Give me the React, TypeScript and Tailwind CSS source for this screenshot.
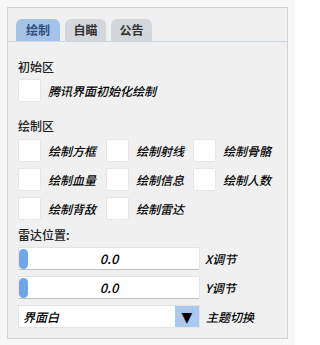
import React from "react";

function Box() {
  return <div className="w-[23px] h-[23px] bg-white border border-[#e6e6e6] rounded-[2px] shrink-0" />;
}

function Check({ label }: { label: string }) {
  return (
    <div className="flex items-center h-[23px]">
      <Box />
      <span className="ml-[7px] text-[12px] italic font-medium text-black leading-none">{label}</span>
    </div>
  );
}

function Slider({ label }: { label: string }) {
  return (
    <div className="flex items-center h-[23px]">
      <div className="relative w-[182px] h-[23px] bg-white border border-[#e4e4e4] border-b-[#bdbdbd] rounded-[2px] flex items-center justify-center">
        <div className="absolute left-[0px] top-[1px] w-[9px] h-[20px] rounded-[5px] bg-[#6fa5eb]" />
        <span className="text-[13px] italic font-medium text-black leading-none">0.0</span>
      </div>
      <span className="ml-[5px] text-[12px] italic font-medium text-black leading-none">{label}</span>
    </div>
  );
}

export default function App() {
  return (
    <div className="w-[295px] h-[345px] bg-[#f7f7f7] pt-[7px] px-[7px] pb-[6px] font-['Noto_Sans_CJK_SC','Noto_Sans',sans-serif]">
      <div className="h-full border border-[#d2d2d2] bg-[#f0f0f0] flex flex-col">
        <div className="flex items-end gap-[5px] pt-[11px] px-[8px] border-b border-[#cbd6e2]">
          <div className="w-[44px] h-[22px] rounded-t-[6px] bg-[#a5c3e7] flex items-center justify-center text-[12px] font-bold text-[#2d4f80]">绘制</div>
          <div className="w-[41px] h-[22px] rounded-t-[6px] bg-[#d3d7dc] flex items-center justify-center text-[12px] font-bold text-[#333]">自瞄</div>
          <div className="w-[41px] h-[22px] rounded-t-[6px] bg-[#d3d7dc] flex items-center justify-center text-[12px] font-bold text-[#333]">公告</div>
        </div>
        <div className="flex flex-col px-[10px]">
          <div className="mt-[16px] h-[18px] leading-[18px] text-[12px] font-medium text-[#222]">初始区</div>
          <div className="mt-[3px]"><Check label="腾讯界面初始化绘制" /></div>
          <div className="mt-[15px] h-[18px] leading-[18px] text-[12px] font-medium text-[#222]">绘制区</div>
          <div className="mt-[4px] grid grid-cols-[88px_87px_88px] gap-y-[6px]">
            <Check label="绘制方框" />
            <Check label="绘制射线" />
            <Check label="绘制骨骼" />
            <Check label="绘制血量" />
            <Check label="绘制信息" />
            <Check label="绘制人数" />
            <Check label="绘制背敌" />
            <Check label="绘制雷达" />
          </div>
          <div className="mt-[6px] h-[18px] leading-[18px] text-[12px] font-medium text-[#222]">雷达位置:</div>
          <div className="mt-[3px] flex flex-col gap-[6px]">
            <Slider label="X调节" />
            <Slider label="Y调节" />
            <div className="flex items-center h-[23px]">
              <div className="w-[182px] h-[23px] bg-white border border-[#e4e4e4] flex items-center">
                <span className="flex-1 pl-[4px] text-[12px] italic font-medium text-black leading-none">界面白</span>
                <div className="w-[24px] h-full bg-[#a9c9ee] flex items-center justify-center text-[14px] text-black leading-none font-['DejaVu_Sans',sans-serif]">▼</div>
              </div>
              <span className="ml-[6px] text-[12px] italic font-medium text-black leading-none">主题切换</span>
            </div>
          </div>
        </div>
      </div>
    </div>
  );
}
